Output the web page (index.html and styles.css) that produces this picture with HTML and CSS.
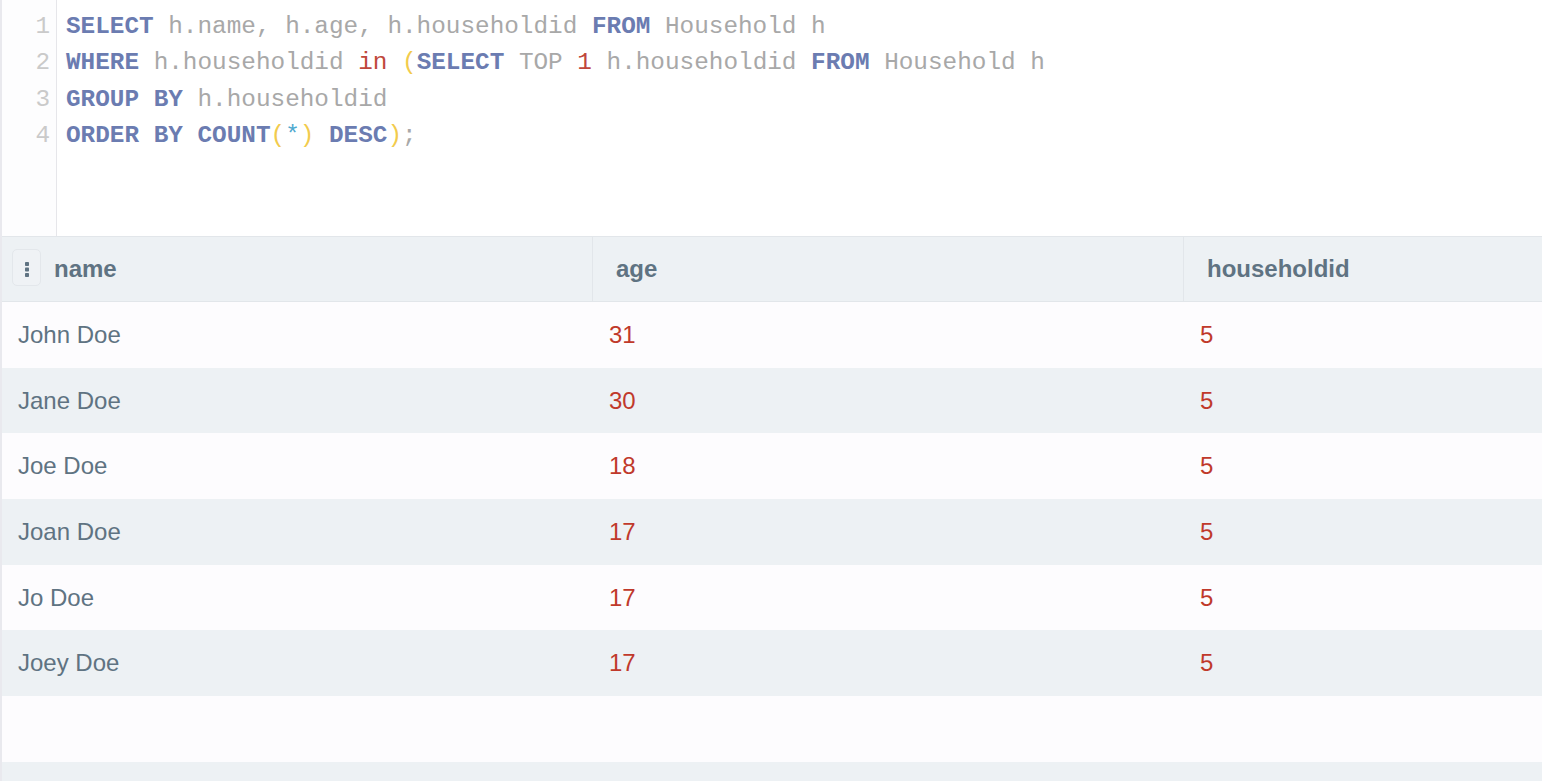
FILE: index.html
```html
<!DOCTYPE html>
<html>
<head>
<meta charset="utf-8">
<link rel="stylesheet" href="styles.css">
</head>
<body>
<div class="app">
  <div class="editor">
    <div class="gutter">
      <div class="ln">1</div>
      <div class="ln">2</div>
      <div class="ln">3</div>
      <div class="ln">4</div>
    </div>
    <div class="code">
      <div class="line"><span class="kw">SELECT</span> <span class="id">h.name, h.age, h.householdid</span> <span class="kw">FROM</span> <span class="id">Household h</span></div>
      <div class="line"><span class="kw">WHERE</span> <span class="id">h.householdid</span> <span class="op">in</span> <span class="par">(</span><span class="kw">SELECT</span> <span class="id">TOP</span> <span class="num">1</span> <span class="id">h.householdid</span> <span class="kw">FROM</span> <span class="id">Household h</span></div>
      <div class="line"><span class="kw">GROUP BY</span> <span class="id">h.householdid</span></div>
      <div class="line"><span class="kw">ORDER BY COUNT</span><span class="par">(</span><span class="star">*</span><span class="par">)</span> <span class="kw">DESC</span><span class="par">)</span><span class="id">;</span></div>
    </div>
  </div>
  <div class="table">
    <div class="row head">
      <div class="cell first">
        <span class="menu"><svg width="6" height="16" viewBox="0 0 6 16"><rect x="1" y="1" width="4" height="4" rx="0.8" fill="#5f7382"/><rect x="1" y="6.5" width="4" height="4" rx="0.8" fill="#5f7382"/><rect x="1" y="12" width="4" height="4" rx="0.8" fill="#5f7382"/></svg></span>
        <span>name</span>
      </div>
      <div class="cell">age</div>
      <div class="cell">householdid</div>
    </div>
    <div class="row odd"><div class="cell txt">John Doe</div><div class="cell num">31</div><div class="cell num">5</div></div>
    <div class="row even"><div class="cell txt">Jane Doe</div><div class="cell num">30</div><div class="cell num">5</div></div>
    <div class="row odd"><div class="cell txt">Joe Doe</div><div class="cell num">18</div><div class="cell num">5</div></div>
    <div class="row even"><div class="cell txt">Joan Doe</div><div class="cell num">17</div><div class="cell num">5</div></div>
    <div class="row odd"><div class="cell txt">Jo Doe</div><div class="cell num">17</div><div class="cell num">5</div></div>
    <div class="row even"><div class="cell txt">Joey Doe</div><div class="cell num">17</div><div class="cell num">5</div></div>
    <div class="row odd"><div class="cell"></div><div class="cell"></div><div class="cell"></div></div>
    <div class="row even"><div class="cell"></div><div class="cell"></div><div class="cell"></div></div>
  </div>
</div>
</body>
</html>
```

FILE: styles.css
```css
html, body {
  margin: 0;
  padding: 0;
  background: #ffffff;
  overflow: hidden;
}
.app {
  width: 1542px;
  height: 781px;
  border-left: 2px solid #e9e9ee;
  box-sizing: border-box;
  overflow: hidden;
}
.editor {
  display: flex;
  height: 236px;
  overflow: hidden;
  background: #ffffff;
  font-family: "Liberation Mono", "Courier New", monospace;
  font-size: 24.35px;
  line-height: 36.4px;
}
.gutter {
  width: 55px;
  flex: none;
  box-sizing: border-box;
  background: #fdfdfe;
  border-right: 1px solid #e6e6ea;
  padding-top: 9px;
  padding-right: 6px;
  text-align: right;
  color: #cacaca;
}
.code {
  padding-top: 9px;
  padding-left: 9px;
  color: #a3a3a3;
}
.line {
  white-space: pre;
}
.kw { color: #6b7cb1; font-weight: bold; }
.id { color: #a8a8a8; }
.op { color: #c0473c; }
.code .num { color: #c0473c; }
.par { color: #f2cb4c; }
.star { color: #4fa9cf; }

.table {
  font-family: "Liberation Sans", Arial, sans-serif;
  font-size: 24px;
  border-top: 1px solid #e2e6ea;
}
.row {
  display: grid;
  grid-template-columns: 590px 591px 1fr;
  height: 65.7px;
  align-items: center;
}
.row.head {
  height: 64px;
  background: #edf1f4;
  border-bottom: 1px solid #e2e6ea;
  color: #5f7382;
  font-weight: bold;
}
.row.head .cell {
  height: 100%;
  display: flex;
  align-items: center;
  padding-left: 23px;
  box-sizing: border-box;
  border-left: 1px solid #e2e6ea;
}
.row.head .cell.first {
  padding-left: 10px;
  border-left: none;
  gap: 13px;
}
.menu {
  width: 29px;
  height: 37px;
  box-sizing: border-box;
  border: 1px solid #e3e7eb;
  border-radius: 5px;
  background: #eff2f5;
  display: flex;
  align-items: flex-start;
  justify-content: center;
  padding-top: 11px;
  margin-top: -4px;
}
.row.odd { background: #fdfcfe; }
.row.even { background: #edf1f4; }
.cell {
  padding-left: 16px;
  white-space: nowrap;
}
.cell.txt { color: #5f7382; }
.cell.num { color: #c0392b; padding-left: 17px; }
```
